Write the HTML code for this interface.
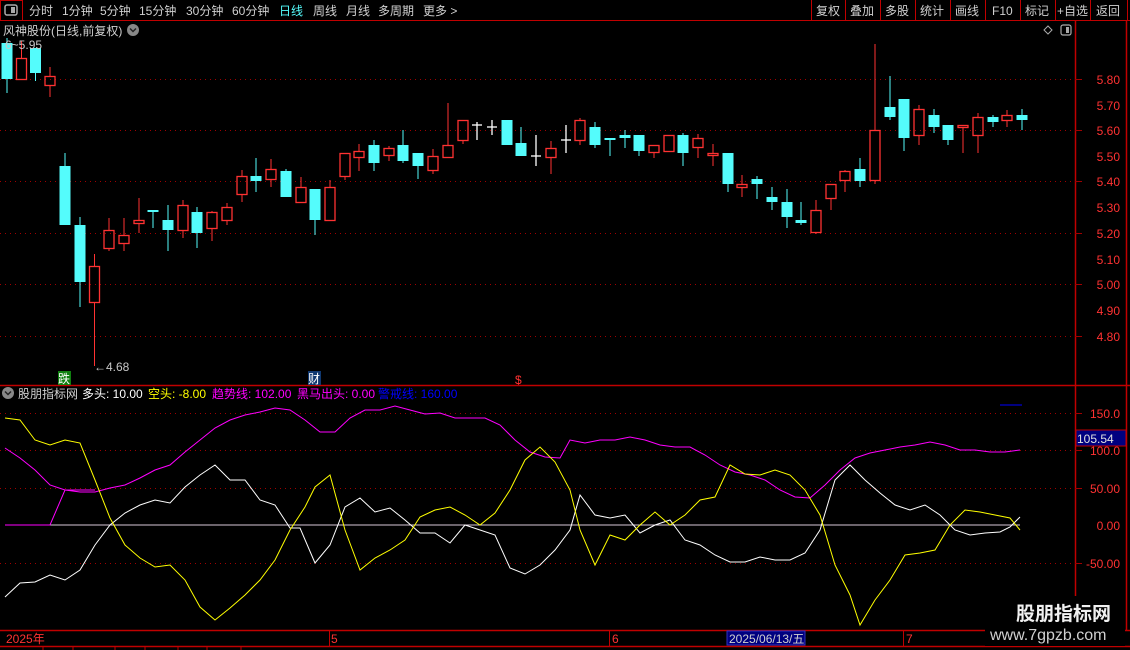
<!DOCTYPE html>
<html><head><meta charset="utf-8"><style>
html,body{margin:0;padding:0;background:#000;width:1130px;height:650px;overflow:hidden}
svg{display:block}
text{font-family:"Liberation Sans","Noto Sans CJK SC",sans-serif;font-size:12px}
</style></head><body>
<svg id="s" width="1130" height="650" xmlns="http://www.w3.org/2000/svg">
<rect width="1130" height="650" fill="#000"/>
<!-- top bar -->
<line x1="0" y1="20.5" x2="1130" y2="20.5" stroke="#c00000"/>
<rect x="0.5" y="0.5" width="22" height="20" fill="none" stroke="#c00000"/>
<rect x="5" y="5" width="12" height="10" rx="2" fill="none" stroke="#aaa" stroke-width="1.5"/>
<rect x="11" y="7" width="4" height="6" fill="#aaa"/>
<g fill="#d0d0d0">
<text x="29" y="15">分时</text><text x="62" y="15">1分钟</text><text x="100" y="15">5分钟</text>
<text x="139" y="15">15分钟</text><text x="186" y="15">30分钟</text><text x="232" y="15">60分钟</text>
<text x="279" y="15" fill="#54fcfc">日线</text><text x="313" y="15">周线</text><text x="346" y="15">月线</text>
<text x="378" y="15">多周期</text><text x="423" y="15">更多 &gt;</text>
<text x="816" y="15">复权</text><text x="850" y="15">叠加</text><text x="885" y="15">多股</text>
<text x="920" y="15">统计</text><text x="955" y="15">画线</text><text x="992" y="15">F10</text>
<text x="1025" y="15">标记</text><text x="1057" y="15">+自选</text><text x="1096" y="15">返回</text>
</g>
<g stroke="#c00000"><line x1="811.5" y1="0" x2="811.5" y2="20"/><line x1="845.5" y1="0" x2="845.5" y2="20"/><line x1="880.5" y1="0" x2="880.5" y2="20"/><line x1="915.5" y1="0" x2="915.5" y2="20"/><line x1="950.5" y1="0" x2="950.5" y2="20"/><line x1="985.5" y1="0" x2="985.5" y2="20"/><line x1="1020.5" y1="0" x2="1020.5" y2="20"/><line x1="1055.5" y1="0" x2="1055.5" y2="20"/><line x1="1090.5" y1="0" x2="1090.5" y2="20"/><line x1="1127.5" y1="0" x2="1127.5" y2="20"/></g>
<text x="3" y="35" fill="#d0d0d0">风神股份(日线,前复权)</text>
<circle cx="133" cy="30" r="6" fill="#888"/><path d="M130 28.5l3 3 3-3" stroke="#222" stroke-width="1.5" fill="none"/>
<path d="M1048 26l4 4-4 4-4-4z" fill="none" stroke="#aaa"/>
<rect x="1061" y="25" width="10" height="10" rx="2" fill="none" stroke="#aaa" stroke-width="1.2"/><rect x="1066" y="27" width="3" height="6" fill="#aaa"/>
<!-- axes -->
<line x1="1075.5" y1="20" x2="1075.5" y2="630" stroke="#c00000" stroke-width="1.5"/>
<line x1="1126.5" y1="20" x2="1126.5" y2="630" stroke="#c00000" stroke-width="1.5"/>
<line x1="0" y1="385.5" x2="1130" y2="385.5" stroke="#c00000" stroke-width="1.5"/>
<g id="grid" stroke="#a00000" stroke-dasharray="1 4"></g>
<g fill="#ff3232" text-anchor="end">
<text x="1120" y="84">5.80</text><text x="1120" y="110">5.70</text><text x="1120" y="135">5.60</text><text x="1120" y="161">5.50</text><text x="1120" y="186">5.40</text><text x="1120" y="212">5.30</text><text x="1120" y="238">5.20</text><text x="1120" y="264">5.10</text><text x="1120" y="289">5.00</text><text x="1120" y="315">4.90</text><text x="1120" y="341">4.80</text>
<text x="1120" y="418">150.0</text><text x="1120" y="455">100.0</text><text x="1120" y="493">50.00</text><text x="1120" y="530">0.00</text><text x="1120" y="568">-50.00</text>
</g>
<g id="candles"></g>
<text x="5" y="49" fill="#c8c8c8">6~5.95</text>
<text x="94" y="371" fill="#c8c8c8">←4.68</text>
<rect x="58" y="371" width="13" height="14" fill="#108010"/><text x="58" y="383" fill="#fff">跌</text>
<rect x="308" y="371" width="13" height="14" fill="#103870"/><text x="308" y="383" fill="#fff">财</text>
<text x="515" y="384" fill="#ff3232">$</text>
<!-- indicator header -->
<circle cx="8" cy="393" r="6" fill="#888"/><path d="M5 391.5l3 3 3-3" stroke="#222" stroke-width="1.5" fill="none"/>
<text x="18" y="398" fill="#d0d0d0">股朋指标网</text>
<text x="82" y="398" fill="#fff">多头: 10.00</text>
<text x="148" y="398" fill="#ffff00">空头: -8.00</text>
<text x="212" y="398" fill="#ff00ff">趋势线: 102.00</text>
<text x="297" y="398" fill="#ff00ff">黑马出头: 0.00</text>
<text x="378" y="398" fill="#0000ff">警戒线: 160.00</text>
<g id="ind"></g>
<rect x="1076" y="430" width="50" height="16" fill="#000080" stroke="#c00000"/><text x="1077" y="443" fill="#e0e0e0">105.54</text>
<!-- bottom axis -->
<line x1="0" y1="630.5" x2="1130" y2="630.5" stroke="#c00000" stroke-width="1.5"/>
<line x1="0" y1="646.5" x2="1130" y2="646.5" stroke="#c00000" stroke-width="1.5"/>
<g stroke="#c00000"><line x1="329.5" y1="630" x2="329.5" y2="646"/><line x1="609.5" y1="630" x2="609.5" y2="646"/><line x1="903.5" y1="630" x2="903.5" y2="646"/><line x1="43" y1="646" x2="43" y2="650"/><line x1="73" y1="646" x2="73" y2="650"/><line x1="115" y1="646" x2="115" y2="650"/><line x1="145" y1="646" x2="145" y2="650"/><line x1="178" y1="646" x2="178" y2="650"/><line x1="207" y1="646" x2="207" y2="650"/><line x1="241" y1="646" x2="241" y2="650"/></g>
<g fill="#ff3232"><text x="6" y="643">2025年</text><text x="331" y="643">5</text><text x="612" y="643">6</text><text x="906" y="643">7</text></g>
<rect x="727" y="631" width="78" height="14" fill="#000080" stroke="#3030c0"/><text x="729" y="643" fill="#d0d0d0">2025/06/13/五</text>
<rect x="985" y="596" width="140" height="50" fill="#000"/>
<text x="1016" y="620" fill="#f0f0f0" style="font-size:19px;font-weight:bold">股朋指标网</text>
<text x="990" y="640" fill="#d0d0d0" style="font-size:16px">www.7gpzb.com</text>
</svg>
<script>
var NS="http://www.w3.org/2000/svg";
function el(p,t,a){var e=document.createElementNS(NS,t);for(var k in a)e.setAttribute(k,a[k]);document.getElementById(p).appendChild(e);return e;}
[79,130,181,233,284,336,413,450,488,563].forEach(function(y){el("grid","line",{x1:0,y1:y+.5,x2:1075,y2:y+.5});el("grid","line",{x1:1075,y1:y+.5,x2:1082,y2:y+.5,"stroke-dasharray":"none"});});
var C=[[7,43,79,38,93,"c"],[21.5,58,80,41,80,"r"],[35.5,48,73,48,81,"c"],[50,76,86,67,97,"r"],[65,166,225,153,225,"c"],[80,225,282,217,307,"c"],[94.5,266,303,254,366,"r"],[109,230,249,218,251,"r"],[124,235,244,218,251,"r"],[139,220,224,198,233,"r"],[153,210,212,210,228,"c"],[168,220,230,205,251,"c"],[183,205,231,200,238,"r"],[197,212,233,207,248,"c"],[212,212,229,211,241,"r"],[227,207,221,203,225,"r"],[242,176,195,170,202,"r"],[256,176,181,158,192,"c"],[271,169,180,159,187,"r"],[286,171,197,169,197,"c"],[301,187,203,177,203,"r"],[315,189,220,189,235,"c"],[330,187,221,180,221,"r"],[345,153,177,153,180,"r"],[359,151,158,144,171,"r"],[374,145,163,140,171,"c"],[389,148,156,146,161,"r"],[403,145,161,130,163,"c"],[418,153,166,153,179,"c"],[433,156,171,149,174,"r"],[448,145,158,103,158,"r"],[463,120,141,120,144,"r"],[477,125,125,122,140,"w"],[492,127,127,120,135,"w"],[507,120,145,120,145,"c"],[521,143,156,127,156,"c"],[536,156,156,135,166,"w"],[551,148,158,141,174,"r"],[566,140,140,125,153,"w"],[580,120,141,118,145,"r"],[595,127,145,122,148,"c"],[610,138,140,138,156,"c"],[625,135,138,130,148,"c"],[639,135,151,135,156,"c"],[654,145,153,145,158,"r"],[669,135,152,135,152,"r"],[683,135,153,133,166,"c"],[698,138,148,134,158,"r"],[713,153,156,144,166,"r"],[728,153,184,153,192,"c"],[742,184,188,175,197,"r"],[757,179,184,176,199,"c"],[772,197,202,187,210,"c"],[787,202,217,189,228,"c"],[801,220,223,202,225,"c"],[816,210,233,200,234,"r"],[831,184,199,184,210,"r"],[845,171,181,170,192,"r"],[860,169,181,158,187,"c"],[875,130,181,44,184,"r"],[890,107,117,76,120,"c"],[904,99,138,99,151,"c"],[919,109,136,105,145,"r"],[934,115,127,109,133,"c"],[948,125,140,125,145,"c"],[963,125,128,125,153,"r"],[978,117,136,113,153,"r"],[993,117,122,115,127,"c"],[1007,115,121,110,127,"r"],[1022,115,120,109,130,"c"]];
C.forEach(function(c){var x=c[0],col=c[5]=="r"?"#ff3232":c[5]=="c"?"#54fcfc":"#ffffff";
if(c[5]=="r"){el("candles","line",{x1:x,y1:c[3],x2:x,y2:c[1],stroke:col});el("candles","line",{x1:x,y1:c[2],x2:x,y2:c[4],stroke:col});el("candles","rect",{x:x-5,y:c[1]+.5,width:10,height:Math.max(c[2]-c[1]-1,2),fill:"none",stroke:col,"stroke-width":1.3});}
else if(c[5]=="c"){el("candles","line",{x1:x,y1:c[3],x2:x,y2:c[4],stroke:col});el("candles","rect",{x:x-5.5,y:c[1],width:11,height:Math.max(c[2]-c[1],2),fill:col});}
else{el("candles","line",{x1:x,y1:c[3],x2:x,y2:c[4],stroke:col,"stroke-width":1.3});el("candles","line",{x1:x-5,y1:c[1],x2:x+5,y2:c[1],stroke:col,"stroke-width":1.3});}});
function pl(pts,col){el("ind","polyline",{points:pts,fill:"none",stroke:col,"stroke-width":1});}
pl("5,525 1020,525","#d8c8d8");
pl("5,525 50,525 65,490 95,490","#ff00ff");
pl("5,448 20,458 35,470 50,485 65,490 80,492 95,492 110,488 125,485 140,478 155,470 170,465 185,452 200,440 215,428 230,420 245,415 260,412 275,408 290,410 305,420 320,432 335,432 350,418 365,410 380,410 395,406 410,410 425,414 440,413 455,418 470,418 485,418 500,425 515,440 530,452 545,457 560,458 570,440 585,443 600,440 615,440 630,437 645,440 660,445 675,447 690,447 705,455 720,465 735,472 750,475 765,480 780,490 795,497 810,498 825,485 840,470 855,458 870,453 885,450 900,447 915,445 930,442 945,445 960,450 975,450 990,452 1005,452 1020,450","#ff00ff");
pl("1000,405 1022,405","#0000ff");
pl("5,597 20,583 35,582 50,575 65,580 80,570 95,545 110,525 125,513 140,505 155,500 170,503 185,487 200,475 215,465 230,480 245,480 260,500 275,505 290,528 300,528 315,563 330,545 345,507 360,498 375,512 390,508 405,520 420,533 435,533 450,543 465,525 480,530 495,535 510,568 525,574 540,565 555,550 570,530 580,495 595,515 610,518 625,515 640,533 655,525 670,520 685,540 700,545 715,555 730,562 745,562 760,557 775,560 790,560 805,553 820,530 835,480 850,465 865,480 880,493 895,505 910,510 925,505 940,515 955,530 970,535 985,533 1000,532 1010,527 1020,517","#ffffff");
pl("5,418 20,420 35,440 50,445 65,440 80,443 95,480 110,518 125,545 140,558 155,567 170,565 185,580 200,607 215,620 230,608 245,595 260,580 275,560 290,530 305,507 315,487 330,475 345,530 360,570 375,558 390,550 405,540 420,517 435,510 450,507 465,515 480,525 495,513 510,490 525,460 540,447 555,462 570,490 580,530 595,565 610,535 625,540 640,525 655,512 670,525 685,515 700,500 715,497 730,465 745,474 760,475 775,470 790,475 805,490 820,515 835,565 850,595 860,625 875,600 890,580 905,555 920,553 935,550 950,525 965,510 980,512 995,515 1010,518 1020,530","#ffff00");
</script>
</body></html>
